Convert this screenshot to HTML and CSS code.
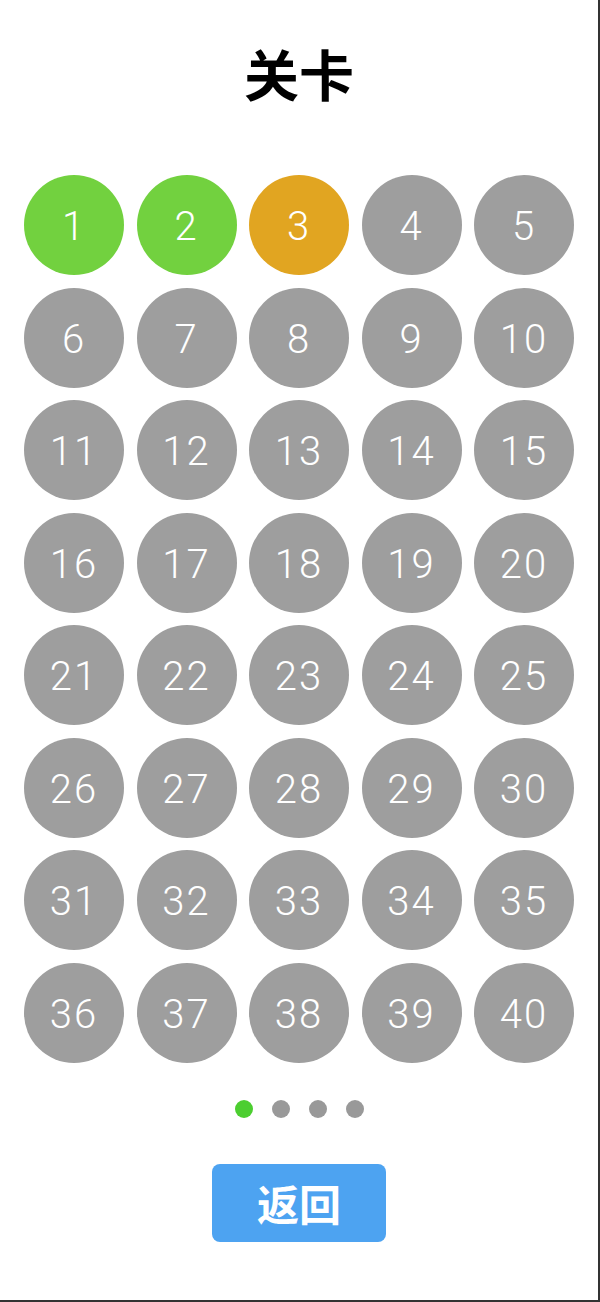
FILE: index.html
```html
<!DOCTYPE html>
<html lang="zh">
<head>
    <meta charset="UTF-8">
    <meta name="viewport" content="width=device-width, initial-scale=1.0">
    <title>关卡</title>
    <link rel="stylesheet" href="styles.css">
</head>
<body>
    <div class="page">
        <h1 class="title">关卡</h1>

        <div class="level-grid" id="levelGrid"></div>

        <div class="pager">
            <span class="dot active"></span>
            <span class="dot"></span>
            <span class="dot"></span>
            <span class="dot"></span>
        </div>

        <button class="back-btn">返回</button>
    </div>

    <script>
        // 生成 1-40 关卡按钮
        const grid = document.getElementById('levelGrid');
        for (let i = 1; i <= 40; i++) {
            const item = document.createElement('div');
            item.className = 'level';
            if (i < 3) item.classList.add('done');
            else if (i === 3) item.classList.add('current');
            item.textContent = i;
            grid.appendChild(item);
        }
    </script>
</body>
</html>
```

FILE: styles.css
```css
body {
    margin: 0;
    background-color: #fff;
    font-family: "Noto Sans CJK SC", "Noto Sans", sans-serif;
}
.page {
    width: 600px;
    height: 1302px;
    box-sizing: border-box;
    border-right: 2px solid #333;
    border-bottom: 2px solid #333;
    display: flex;
    flex-direction: column;
    align-items: center;
}
.title {
    margin: 40px 0 0;
    height: 65px;
    line-height: 65px;
    font-size: 55px;
    font-weight: bold;
    color: #000;
}
.level-grid {
    margin-top: 70px;
    display: grid;
    grid-template-columns: repeat(5, 100px);
    gap: 12.5px;
}
.level {
    width: 100px;
    height: 100px;
    box-sizing: border-box;
    padding-top: 3px;
    border-radius: 50%;
    background-color: #9e9e9e;
    color: #fff;
    display: flex;
    align-items: center;
    justify-content: center;
    font-family: Roboto, "Noto Sans", sans-serif;
    font-size: 40px;
    font-weight: 300;
    letter-spacing: 2px;
}
.level.done {
    background-color: #72d13f;
}
.level.current {
    background-color: #e1a521;
}
.pager {
    margin-top: 37px;
    display: flex;
    gap: 19px;
}
.dot {
    width: 18px;
    height: 18px;
    border-radius: 50%;
    background-color: #999;
}
.dot.active {
    background-color: #4cce30;
}
.back-btn {
    margin-top: 46px;
    width: 174px;
    height: 78px;
    border: none;
    border-radius: 8px;
    background-color: #4da3f1;
    color: #fff;
    font-family: "Noto Sans CJK SC", sans-serif;
    font-size: 42px;
    font-weight: bold;
    cursor: pointer;
}
```
